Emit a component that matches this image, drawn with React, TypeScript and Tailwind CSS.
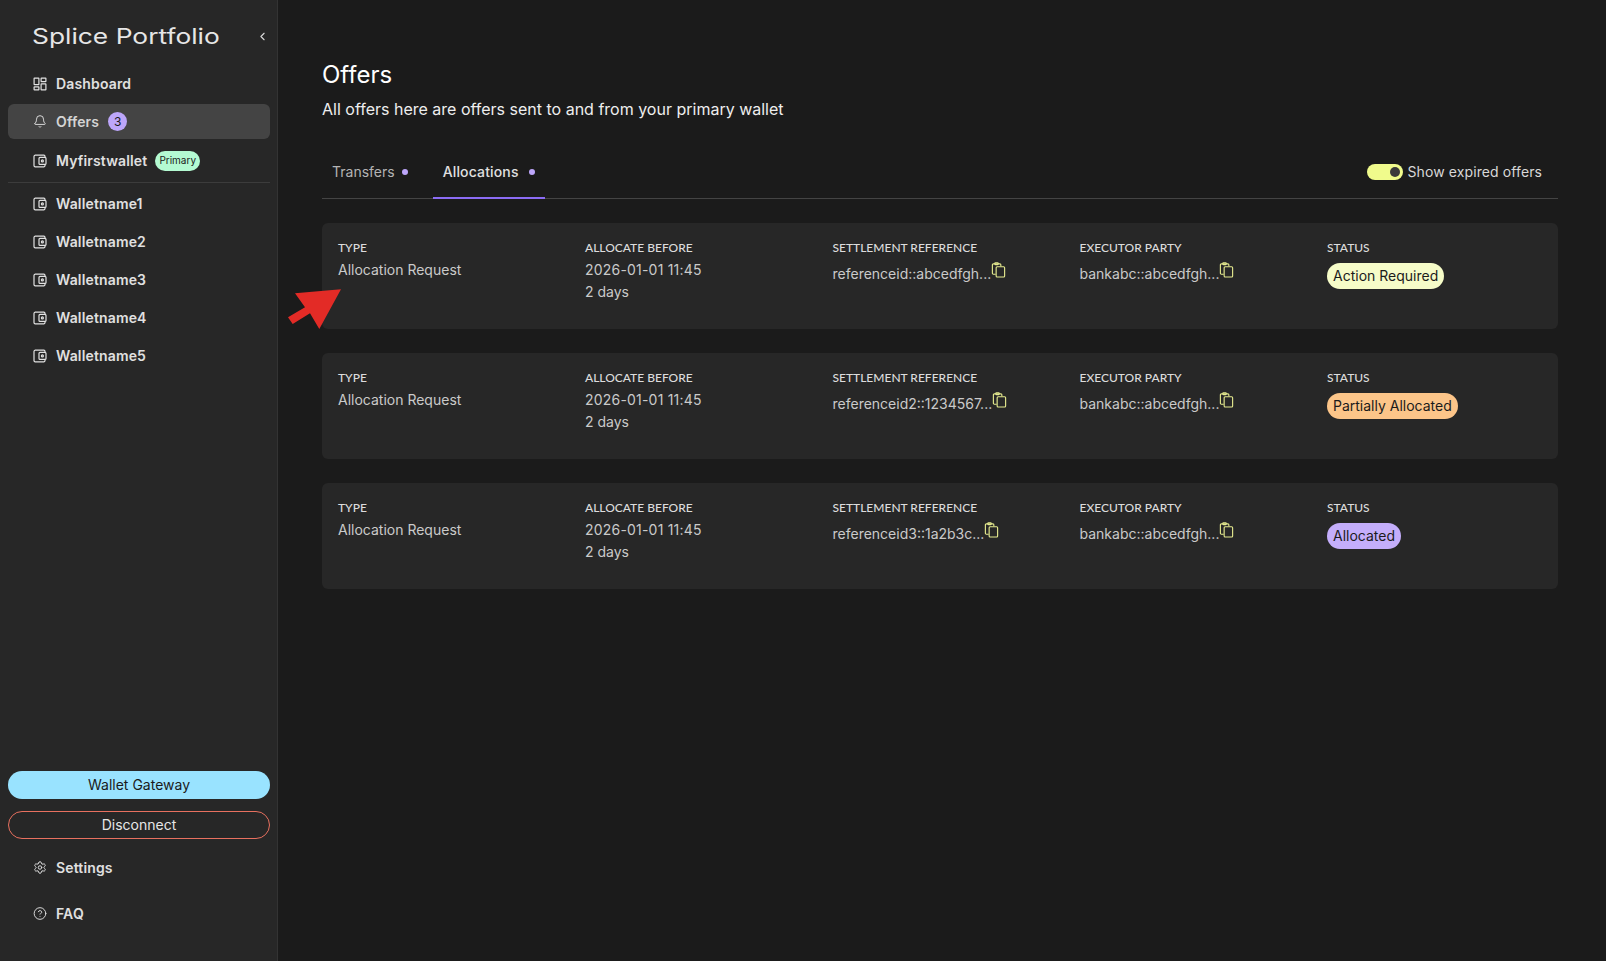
import React from "react";
import { Bell, Settings, CircleHelp, ChevronLeft } from "lucide-react";

function DashboardIcon() {
  return (
    <svg width="14" height="14" viewBox="0 0 14 14" fill="none" stroke="currentColor" strokeWidth="1.2" className="shrink-0">
      <rect x="1.1" y="1.1" width="4.8" height="6.6" rx="0.4" />
      <rect x="8.1" y="1.1" width="4.8" height="3.6" rx="0.4" />
      <rect x="8.1" y="6.9" width="4.8" height="6" rx="0.4" />
      <rect x="1.1" y="9.9" width="4.8" height="3" rx="0.4" />
    </svg>
  );
}

function WalletIcon() {
  return (
    <svg width="14" height="14" viewBox="0 0 14 14" fill="none" stroke="currentColor" strokeWidth="1.2" className="shrink-0">
      <path d="M12 3.2V2.4a1.2 1.2 0 0 0-1.2-1.2H2.2A1.4 1.4 0 0 0 1 2.6v8.8a1.4 1.4 0 0 0 1.3 1.4h8.5a1.2 1.2 0 0 0 1.2-1.2v-.8" />
      <rect x="6" y="3.4" width="7" height="7" rx="1" />
      <circle cx="9.4" cy="6.9" r="1" />
    </svg>
  );
}

function CopyIcon() {
  return (
    <svg width="15" height="16" viewBox="0 0 15 17" fill="none" stroke="#e6eb8f" strokeWidth="1.2" className="mt-px shrink-0">
      <path d="M4.5 13H2a1 1 0 0 1-1-1V3a1 1 0 0 1 1-1h7a1 1 0 0 1 1 1v1.5" />
      <rect x="3.6" y="0.8" width="3.6" height="2" rx="0.6" />
      <rect x="5" y="5" width="9" height="11" rx="1" />
    </svg>
  );
}

function NavItem({ icon, label, active, tall, children }: { icon: React.ReactNode; label: string; active?: boolean; tall?: boolean; children?: React.ReactNode }) {
  return (
    <div className={`flex items-center gap-[9px] rounded-md pl-[25px] text-sm font-semibold tracking-[0.15px] ${tall ? "h-[37px]" : "h-[35px]"} ${active ? "bg-[#444444] text-[#d4d4d4]" : "text-[#e0e0e0]"}`}>
      <span className="flex w-[14px] shrink-0 items-center justify-center text-[#e2e2e2]">{icon}</span>
      <span>{label}</span>
      {children}
    </div>
  );
}

function Field({ label, children }: { label: string; children: React.ReactNode }) {
  return (
    <div>
      <div className="font-['Lato',sans-serif] text-xs font-medium leading-[18px] text-[#dcdcdc]">{label}</div>
      {children}
    </div>
  );
}

function CopyValue({ text }: { text: string }) {
  return (
    <div className="mt-1 flex items-start text-sm leading-[22px] text-[#cacaca]">
      <span className="mt-[2px]">{text}</span>
      <CopyIcon />
    </div>
  );
}

function Card({ reference, status, statusClass }: { reference: string; status: string; statusClass: string }) {
  return (
    <div className="grid h-[106px] grid-cols-[247px_247.5px_247px_247.5px_1fr] rounded-md bg-[#272727] pl-4 pt-4">
      <Field label="TYPE">
        <div className="mt-[2px] text-sm leading-[22px] text-[#cacaca]">Allocation Request</div>
      </Field>
      <Field label="ALLOCATE BEFORE">
        <div className="mt-[2px] text-sm tracking-[0.2px] leading-[22px] text-[#cacaca]">2026-01-01 11:45</div>
        <div className="text-sm leading-[22px] text-[#cacaca]">2 days</div>
      </Field>
      <Field label="SETTLEMENT REFERENCE">
        <CopyValue text={reference} />
      </Field>
      <Field label="EXECUTOR PARTY">
        <CopyValue text="bankabc::abcedfgh..." />
      </Field>
      <Field label="STATUS">
        <span className={`mt-[6px] inline-flex h-[26px] items-center rounded-full px-[6px] text-sm text-[#1b1b1b] ${statusClass}`}>{status}</span>
      </Field>
    </div>
  );
}

export default function App() {
  return (
    <div className="relative flex h-screen overflow-hidden bg-[#1b1b1b] font-['Inter',sans-serif]">
      <aside className="flex w-[278px] shrink-0 flex-col border-r border-[#333333] bg-[#272727] pl-2 pr-[7px]">
        <div className="flex h-[66px] items-center justify-between pl-6 pt-[6px]">
          <span className="origin-left scale-x-[1.255] whitespace-nowrap text-[21px] font-normal leading-none text-[#e6e6e6]">Splice Portfolio</span>
          <ChevronLeft size={13} className="mr-[1px] text-[#d8d8d8]" />
        </div>
        <nav className="flex flex-col gap-[3px]">
          <NavItem icon={<DashboardIcon />} label="Dashboard" />
          <NavItem icon={<Bell size={17} strokeWidth={1.6} />} label="Offers" active>
            <span className="flex h-[19px] w-[19px] items-center justify-center rounded-full bg-[#bda6fa] text-xs font-normal text-[#1b1b1b]">3</span>
          </NavItem>
          <NavItem icon={<WalletIcon />} label="Myfirstwallet" tall>
            <span className="-ml-[1px] flex h-5 items-center rounded-full bg-[#b4fad2] px-[4px] text-[10px] font-normal tracking-normal text-[#1b1b1b]">Primary</span>
          </NavItem>
        </nav>
        <div className="mb-[3px] mt-[3px] h-px bg-[#3c3c3c]" />
        <div className="flex flex-col gap-[3px]">
          {["Walletname1", "Walletname2", "Walletname3", "Walletname4", "Walletname5"].map((n) => (
            <NavItem key={n} icon={<WalletIcon />} label={n} />
          ))}
        </div>
        <div className="mt-auto flex flex-col gap-3">
          <button className="h-[28px] rounded-full bg-[#99e3ff] text-sm text-[#1b1b1b]">Wallet Gateway</button>
          <button className="h-[28px] rounded-full border border-[#e8705f] text-sm text-[#e6e6e6]">Disconnect</button>
        </div>
        <div className="mb-[30px] mt-[11px] flex flex-col gap-[11px]">
          <NavItem icon={<Settings size={17} strokeWidth={1.6} />} label="Settings" />
          <NavItem icon={<CircleHelp size={17} strokeWidth={1.6} />} label="FAQ" />
        </div>
      </aside>
      <main className="min-w-0 flex-1 pl-[44px] pr-[48px] pt-[59px]">
        <h1 className="text-2xl font-normal leading-8 text-white">Offers</h1>
        <p className="mt-[6px] text-base leading-6 text-[#eeeeee]">All offers here are offers sent to and from your primary wallet</p>
        <div className="mt-[25px] flex items-center justify-between border-b border-[#444444]">
          <div className="flex">
            <div className="flex h-[52px] items-center gap-[7px] px-[10px] text-sm text-[#b4b4b4]">
              Transfers
              <span className="h-[6px] w-[6px] rounded-full bg-[#bda6fa]" />
            </div>
            <div className="-mb-px ml-[15px] flex h-[53px] w-[112px] items-center gap-[10px] border-b-2 border-[#8b6cf5] pl-[10px] text-sm font-medium tracking-[0.15px] text-[#e0e0e0]">
              Allocations
              <span className="h-[6px] w-[6px] rounded-full bg-[#bda6fa]" />
            </div>
          </div>
          <div className="mr-[16px] flex items-center gap-[5px] text-sm tracking-[0.1px] text-[#d8d8d8]">
            <span className="flex h-[16px] w-[36px] items-center justify-end rounded-full bg-[#f0fb8c] pr-[3px]">
              <span className="h-[10px] w-[10px] rounded-full bg-[#3a3a3a]" />
            </span>
            Show expired offers
          </div>
        </div>
        <div className="mt-6 flex flex-col gap-6">
          <Card reference="referenceid::abcedfgh..." status="Action Required" statusClass="bg-[#f6fcc8]" />
          <Card reference="referenceid2::1234567..." status="Partially Allocated" statusClass="bg-[#fcc589]" />
          <Card reference="referenceid3::1a2b3c..." status="Allocated" statusClass="bg-[#c4aefb]" />
        </div>
      </main>
      <svg className="pointer-events-none absolute left-[286px] top-[287px]" width="58" height="44" viewBox="0 0 58 44">
        <polygon points="55,2.3 33.3,42 24,26.3 6.7,37 2,30.3 19,20.3 9,6.3" fill="#e32b26" />
      </svg>
    </div>
  );
}
